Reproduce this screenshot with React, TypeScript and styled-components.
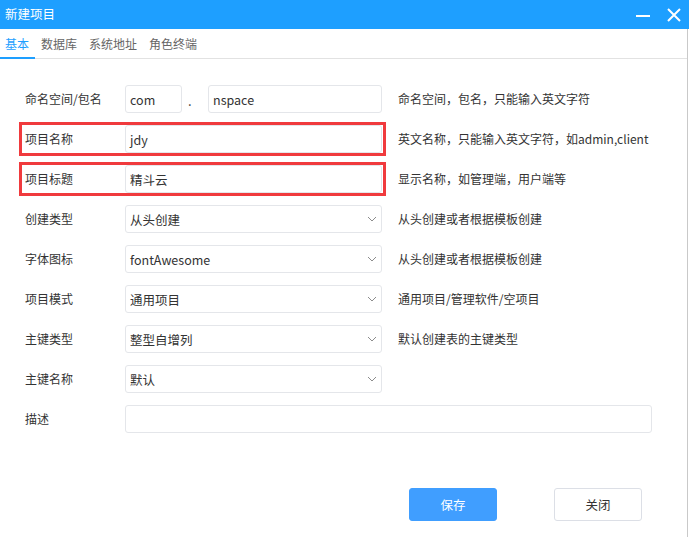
import React from 'react';
import styled, { createGlobalStyle } from 'styled-components';

const GlobalStyle = createGlobalStyle`
  html, body {
    margin: 0;
    padding: 0;
    background: #fff;
  }
  body {
    font-family: 'Noto Sans CJK SC', 'Noto Sans', sans-serif;
    color: #333;
  }
`;

const Window = styled.div`
  width: 689px;
  height: 537px;
  display: flex;
  flex-direction: column;
  background: #fff;
  overflow: hidden;
`;

const TitleBar = styled.div`
  height: 29px;
  flex-shrink: 0;
  background: #1e9fff;
  color: #fff;
  display: flex;
  align-items: center;
  justify-content: space-between;
  padding-left: 5px;
  font-size: 12.5px;
  line-height: 1;
`;

const TitleActions = styled.div`
  display: flex;
  align-items: center;
  gap: 17px;
  padding-right: 8px;
`;

const IconButton = styled.span`
  display: flex;
  align-items: center;
  justify-content: center;
  width: 14px;
  height: 14px;
  cursor: pointer;
`;

const Content = styled.div`
  flex: 1;
  display: flex;
  flex-direction: column;
  border-right: 1px solid #c9c9c9;
  margin-right: 1px;
`;

const TabBar = styled.div`
  height: 29px;
  display: flex;
  align-items: stretch;
  gap: 1px;
  border-bottom: 1px solid #e2e2e2;
  box-sizing: content-box;
`;

const Tab = styled.div<{ $active?: boolean }>`
  display: flex;
  align-items: center;
  padding: 0 6px 0 5px;
  font-size: 12px;
  color: ${(p) => (p.$active ? '#1e9fff' : '#666')};
  border-bottom: 2px solid ${(p) => (p.$active ? '#1e9fff' : 'transparent')};
  margin-bottom: -1px;
  cursor: pointer;
`;

const Form = styled.div`
  padding-top: 20px;
  display: flex;
  flex-direction: column;
`;

const Row = styled.div`
  height: 40px;
  display: flex;
  align-items: center;
  padding-left: 19px;
`;

const FieldGroup = styled.div<{ $marked?: boolean; $wide?: boolean }>`
  display: flex;
  align-items: center;
  box-sizing: border-box;
  width: ${(p) => (p.$wide ? '637px' : '367px')};
  height: 34px;
  padding: 0 1px 0 3px;
  border: 3px solid ${(p) => (p.$marked ? '#f03a3d' : 'transparent')};
`;

const Label = styled.div`
  width: 100px;
  flex-shrink: 0;
  font-size: 12px;
  line-height: 1;
  color: #333;
`;

const Input = styled.div<{ $width?: number }>`
  box-sizing: border-box;
  ${(p) => (p.$width ? `width: ${p.$width}px;` : 'flex: 1;')}
  height: 28px;
  border: 1px solid #e4e6ea;
  border-radius: 3px;
  padding: 0 4px;
  display: flex;
  align-items: center;
  justify-content: space-between;
  font-size: 12.5px;
  color: #333;
  background: #fff;
`;

const Dot = styled.span`
  width: 26px;
  box-sizing: border-box;
  padding: 3px 0 0 6px;
  font-size: 13px;
`;

const Hint = styled.div`
  margin-left: 12px;
  font-size: 12px;
  line-height: 1;
  color: #333;
  white-space: nowrap;
`;

const Footer = styled.div`
  margin-top: 49px;
  display: flex;
  justify-content: flex-end;
  gap: 57px;
  padding-right: 45px;
`;

const Button = styled.button<{ $primary?: boolean }>`
  width: 88px;
  height: 33px;
  border-radius: 3px;
  font-family: inherit;
  font-size: 12.5px;
  cursor: pointer;
  border: 1px solid ${(p) => (p.$primary ? '#409eff' : '#dcdfe6')};
  background: ${(p) => (p.$primary ? '#409eff' : '#fff')};
  color: ${(p) => (p.$primary ? '#fff' : '#333')};
`;

const Chevron = () => (
  <svg width="10" height="6" viewBox="0 0 10 6" fill="none">
    <path d="M1 1l4 4 4-4" stroke="#8c8c8c" strokeWidth="1" />
  </svg>
);

const Select = ({ value }: { value: string }) => (
  <Input>
    <span>{value}</span>
    <Chevron />
  </Input>
);

const selectRows = [
  { label: '创建类型', value: '从头创建', hint: '从头创建或者根据模板创建' },
  { label: '字体图标', value: 'fontAwesome', hint: '从头创建或者根据模板创建' },
  { label: '项目模式', value: '通用项目', hint: '通用项目/管理软件/空项目' },
  { label: '主键类型', value: '整型自增列', hint: '默认创建表的主键类型' },
  { label: '主键名称', value: '默认', hint: '' },
];

const tabs = ['基本', '数据库', '系统地址', '角色终端'];

const App = () => {
  return (
    <>
      <GlobalStyle />
      <Window>
        <TitleBar>
          <span>新建项目</span>
          <TitleActions>
            <IconButton>
              <svg width="14" height="14" viewBox="0 0 14 14">
                <rect x="0" y="7" width="14" height="2" fill="#fff" />
              </svg>
            </IconButton>
            <IconButton>
              <svg width="14" height="14" viewBox="0 0 14 14">
                <path d="M1 1l12 12M13 1L1 13" stroke="#fff" strokeWidth="2" />
              </svg>
            </IconButton>
          </TitleActions>
        </TitleBar>
        <Content>
          <TabBar>
            {tabs.map((t, i) => (
              <Tab key={t} $active={i === 0}>
                {t}
              </Tab>
            ))}
          </TabBar>
          <Form>
            <Row>
              <FieldGroup>
                <Label>命名空间/包名</Label>
                <Input $width={57}>com</Input>
                <Dot>.</Dot>
                <Input>nspace</Input>
              </FieldGroup>
              <Hint>命名空间，包名，只能输入英文字符</Hint>
            </Row>
            <Row>
              <FieldGroup $marked>
                <Label>项目名称</Label>
                <Input>jdy</Input>
              </FieldGroup>
              <Hint>英文名称，只能输入英文字符，如admin,client</Hint>
            </Row>
            <Row>
              <FieldGroup $marked>
                <Label>项目标题</Label>
                <Input>精斗云</Input>
              </FieldGroup>
              <Hint>显示名称，如管理端，用户端等</Hint>
            </Row>
            {selectRows.map((r) => (
              <Row key={r.label}>
                <FieldGroup>
                  <Label>{r.label}</Label>
                  <Select value={r.value} />
                </FieldGroup>
                {r.hint && <Hint>{r.hint}</Hint>}
              </Row>
            ))}
            <Row>
              <FieldGroup $wide>
                <Label>描述</Label>
                <Input />
              </FieldGroup>
            </Row>
          </Form>
          <Footer>
            <Button $primary>保存</Button>
            <Button>关闭</Button>
          </Footer>
        </Content>
      </Window>
    </>
  );
};

export default App;
